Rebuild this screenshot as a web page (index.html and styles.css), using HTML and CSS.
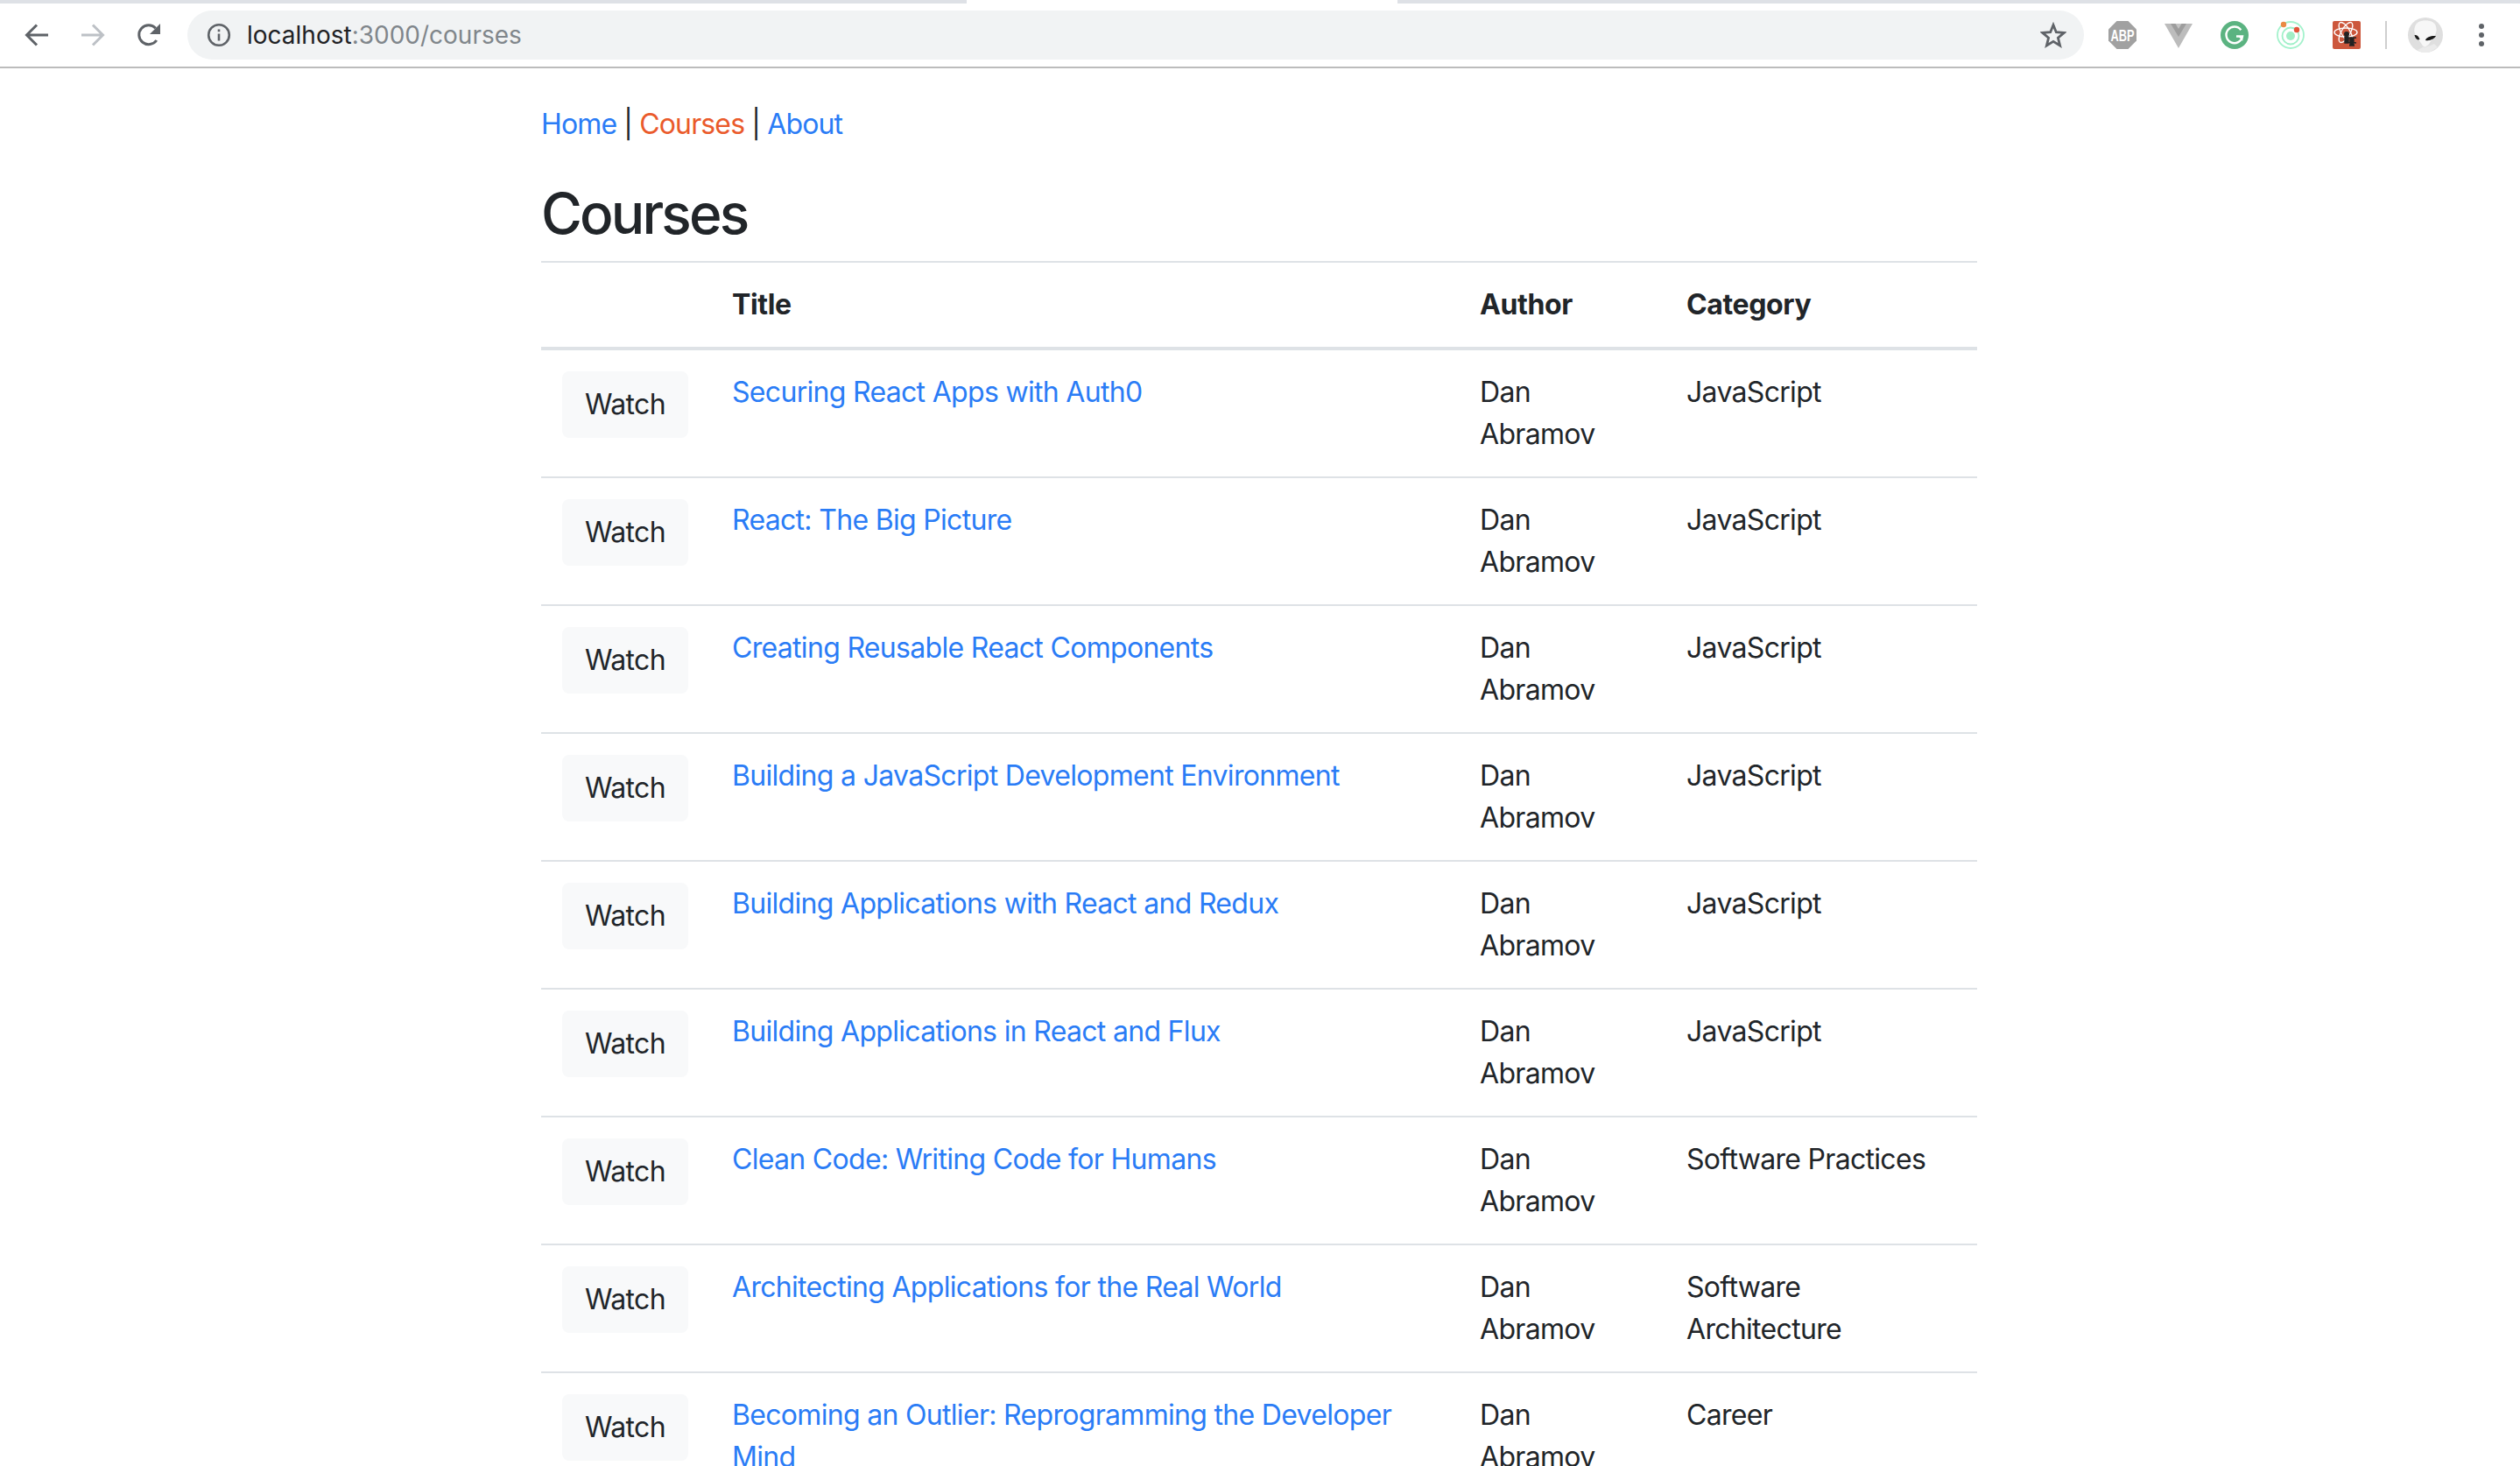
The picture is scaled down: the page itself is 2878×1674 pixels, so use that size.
FILE: index.html
```html
<!DOCTYPE html>
<html lang="en">
<head>
    <meta charset="UTF-8">
    <meta name="viewport" content="width=device-width, initial-scale=1.0">
    <title>Courses</title>
    <link rel="stylesheet" href="styles.css">
</head>
<body>
    <div class="tabstrip"><div class="tab-current"></div></div>
    <div class="toolbar">
        <svg class="nav-icon" width="28" height="28" viewBox="0 0 28 28"><path d="M27 14H3.500M14 2.500 2.500 14 14 25.500" fill="none" stroke="#5f6368" stroke-width="3"/></svg>
        <svg class="nav-icon" width="28" height="28" viewBox="0 0 28 28"><path d="M1 14h23.500M14 2.500 25.500 14 14 25.500" fill="none" stroke="#bdc1c6" stroke-width="3"/></svg>
        <svg class="nav-icon" width="28" height="28" viewBox="0 0 28 28"><path d="M22.800 20A11 11 0 1 1 21.800 6.200" fill="none" stroke="#5f6368" stroke-width="3"/><path d="M27 1v12H15z" fill="#5f6368"/></svg>
        <div class="omnibox">
            <svg width="28" height="28" viewBox="0 0 28 28"><circle cx="14" cy="14" r="11.800" fill="none" stroke="#5f6368" stroke-width="2.600"/><path d="M12.700 12.500h2.600v8h-2.600zM12.700 7.500h2.600v2.700h-2.600z" fill="#5f6368"/></svg>
            <div class="url">localhost<span class="url-rest">:3000/courses</span></div>
            <svg class="star" width="30" height="30" viewBox="0 0 30 30"><path d="M15 3.500 18.300 11.700 27.300 12.400 20.400 18.200 22.600 27 15 22.300 7.400 27 9.600 18.200 2.700 12.400 11.700 11.700z" fill="none" stroke="#5f6368" stroke-width="2.800"/></svg>
        </div>
        <div class="extensions">
            <svg width="32" height="32" viewBox="0 0 32 32"><path d="M9.500 0h13L32 9.500v13L22.500 32h-13L0 22.500v-13z" fill="#a1a1a1"/><text x="16" y="22.500" class="abp-text" textLength="27" lengthAdjust="spacingAndGlyphs">ABP</text></svg>
            <svg width="32" height="32" viewBox="0 0 32 32"><path d="M0 3h32L16 31z" fill="#bcbcbc"/><path d="M7 3h18l-9 15z" fill="#9d9d9d"/><path d="M12.500 3h7L16 9z" fill="#c4c4c4"/></svg>
            <svg width="32" height="32" viewBox="0 0 32 32"><circle cx="16" cy="16" r="16" fill="#5bb381"/><path d="M23.300 10.300A9.300 9.300 0 1 0 25 17.500h-7" fill="none" stroke="#fff" stroke-width="2.400"/><path d="M25.300 17v6l-5-5.500z" fill="#fff"/></svg>
            <svg width="32" height="32" viewBox="0 0 32 32"><circle cx="16" cy="16" r="15" fill="none" stroke="#a4f2cc" stroke-width="1.800"/><circle cx="16" cy="17" r="9.500" fill="none" stroke="#9ff0c8" stroke-width="1.800"/><circle cx="16" cy="17" r="5" fill="#a2eec6"/><circle cx="8" cy="4" r="3.200" fill="#ea8a45"/><circle cx="23" cy="10" r="3.200" fill="#e2553a"/></svg>
            <svg width="32" height="32" viewBox="0 0 32 32"><rect width="32" height="32" rx="2" fill="#cc573c"/><g fill="none" stroke="#fff" stroke-width="1.400"><ellipse cx="15" cy="13" rx="13" ry="5"/><ellipse cx="15" cy="13" rx="13" ry="5" transform="rotate(60 15 13)"/><ellipse cx="15" cy="13" rx="13" ry="5" transform="rotate(120 15 13)"/></g><circle cx="16" cy="15" r="3" fill="#222"/><path d="M14 18h4v7h-4zM20 19h4v8h-4zM18 20l9-1M18 24l9 1M19 28l6 0" stroke="#222" stroke-width="1.400" fill="#222"/></svg>
            <div class="ext-divider"></div>
            <svg class="avatar" width="40" height="40" viewBox="0 0 40 40"><circle cx="20" cy="20" r="20" fill="#dfdfdf"/><path d="M19 33c5 0 9-2 11-3l4 4-10 6h-8l-5-3z" fill="#ebebeb"/><path d="M7 13C8 5 14 3 20 3s13 2 13 11c0 6-6 12-9 17l-4 3c-2 0-3-1-5-4C12 25 6 20 7 13z" fill="#f7f7f7" stroke="#d2d2d2" stroke-width=".5"/><path d="M7.500 20c2.500-.5 5 1.500 6 5l-2 .5c-2-.5-3.500-3-4-5.500zM20 26c1-4 7-5.500 12-5-1 2.500-6 6-12 5z" fill="#1b1b1b"/></svg>
        </div>
        <svg class="menu" width="6" height="26" viewBox="0 0 6 26"><circle cx="3" cy="3" r="3" fill="#5f6368"/><circle cx="3" cy="13" r="3" fill="#5f6368"/><circle cx="3" cy="23" r="3" fill="#5f6368"/></svg>
    </div>

    <div class="container">
        <nav class="site-nav">
            <a href="#">Home</a> | <a href="#" class="active">Courses</a> | <a href="#">About</a>
        </nav>
        <h2>Courses</h2>
        <table>
            <colgroup>
                <col class="col-watch"><col class="col-title"><col class="col-author"><col>
            </colgroup>
            <thead>
                <tr><th></th><th>Title</th><th>Author</th><th>Category</th></tr>
            </thead>
            <tbody>
                <tr><td><button class="btn">Watch</button></td><td><a href="#">Securing React Apps with Auth0</a></td><td>Dan Abramov</td><td>JavaScript</td></tr>
                <tr><td><button class="btn">Watch</button></td><td><a href="#">React: The Big Picture</a></td><td>Dan Abramov</td><td>JavaScript</td></tr>
                <tr><td><button class="btn">Watch</button></td><td><a href="#">Creating Reusable React Components</a></td><td>Dan Abramov</td><td>JavaScript</td></tr>
                <tr><td><button class="btn">Watch</button></td><td><a href="#">Building a JavaScript Development Environment</a></td><td>Dan Abramov</td><td>JavaScript</td></tr>
                <tr><td><button class="btn">Watch</button></td><td><a href="#">Building Applications with React and Redux</a></td><td>Dan Abramov</td><td>JavaScript</td></tr>
                <tr><td><button class="btn">Watch</button></td><td><a href="#">Building Applications in React and Flux</a></td><td>Dan Abramov</td><td>JavaScript</td></tr>
                <tr><td><button class="btn">Watch</button></td><td><a href="#">Clean Code: Writing Code for Humans</a></td><td>Dan Abramov</td><td>Software Practices</td></tr>
                <tr><td><button class="btn">Watch</button></td><td><a href="#">Architecting Applications for the Real World</a></td><td>Dan Abramov</td><td>Software Architecture</td></tr>
                <tr><td><button class="btn">Watch</button></td><td><a href="#">Becoming an Outlier: Reprogramming the Developer Mind</a></td><td>Dan Abramov</td><td>Career</td></tr>
            </tbody>
        </table>
    </div>
</body>
</html>
```

FILE: styles.css
```css
html, body {
    height: 100%;
    overflow: hidden;
}
body {
    margin: 0;
    font-family: "Inter", "Liberation Sans", sans-serif;
    font-size: 32px;
    line-height: 1.5;
    letter-spacing: -0.0215em;
    color: #212529;
    background-color: #fff;
}
a {
    color: #2a7cf6;
    text-decoration: none;
}

/* browser chrome */
.tabstrip {
    height: 4px;
    background-color: #dee1e6;
    padding-left: 1104px;
}
.tab-current {
    width: 492px;
    height: 4px;
    background-color: #fff;
}
.toolbar {
    height: 74px;
    box-sizing: border-box;
    border-bottom: 2px solid #bcbcbc;
    display: flex;
    align-items: center;
    padding: 0 41px 0 28px;
}
.nav-icon {
    margin-right: 36px;
}
.nav-icon:nth-child(3) {
    margin-right: 30px;
}
.omnibox {
    width: 2166px;
    height: 56px;
    box-sizing: border-box;
    border-radius: 28px;
    background-color: #f1f3f4;
    display: flex;
    align-items: center;
    padding: 0 20px 0 22px;
}
.url {
    flex: 1;
    margin-left: 18px;
    font-size: 28px;
    letter-spacing: 0;
    color: #202124;
}
.url-rest {
    color: #80868b;
}
.extensions {
    display: flex;
    align-items: center;
    gap: 32px;
    margin-left: 28px;
}
.ext-divider {
    width: 2px;
    height: 32px;
    margin-left: -4px;
    background-color: #cfcfcf;
}
.avatar {
    margin-left: -8px;
}
.abp-text {
    font-family: "Liberation Sans", sans-serif;
    font-size: 18px;
    font-weight: 700;
    letter-spacing: 0;
    fill: #fff;
    text-anchor: middle;
}
.menu {
    margin-left: 41px;
}

/* page */
.container {
    width: 1640px;
    margin-left: 618px;
    padding-top: 40px;
}
.site-nav {
    height: 48px;
    letter-spacing: -0.027em;
}
.active {
    color: #ea5a2b;
}
h2 {
    margin: 40px 0 15px;
    font-size: 64px;
    font-weight: 500;
    line-height: 1.2;
    letter-spacing: -0.045em;
}
table {
    width: 100%;
    table-layout: fixed;
    border-collapse: collapse;
}
.col-watch {
    width: 194px;
}
.col-title {
    width: 854px;
}
.col-author {
    width: 236px;
}
th, td {
    padding: 24px;
    vertical-align: top;
    text-align: left;
    border-top: 2px solid #dee2e6;
}
th {
    font-weight: 700;
    letter-spacing: -0.012em;
    border-bottom: 4px solid #dee2e6;
}
.btn {
    display: block;
    width: 144px;
    padding: 12px 0;
    font-family: inherit;
    font-size: 32px;
    line-height: 1.5;
    letter-spacing: inherit;
    color: #212529;
    background-color: #f8f9fa;
    border: 2px solid #f8f9fa;
    border-radius: 8px;
}
```
